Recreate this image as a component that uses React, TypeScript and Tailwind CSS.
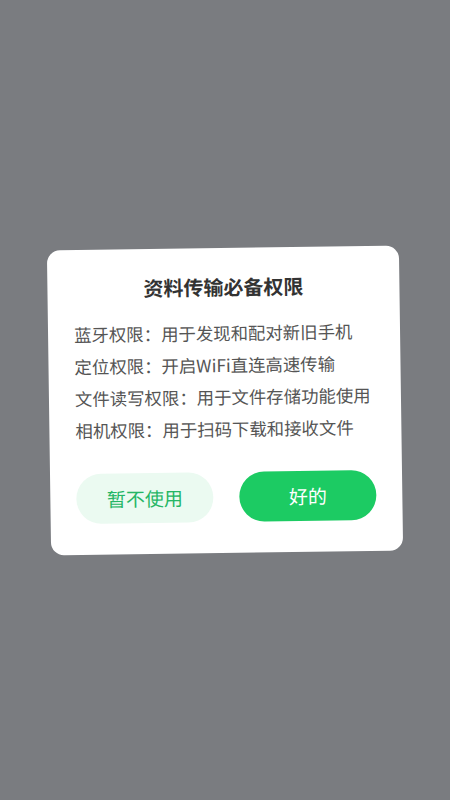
const FONT = '"Noto Sans CJK SC", "Noto Sans", sans-serif';

const PERMISSIONS = [
  { name: "蓝牙权限", desc: "用于发现和配对新旧手机" },
  { name: "定位权限", desc: "开启WiFi直连高速传输" },
  { name: "文件读写权限", desc: "用于文件存储功能使用" },
  { name: "相机权限", desc: "用于扫码下载和接收文件" },
];

export default function App() {
  return (
    <div
      className="w-[450px] h-[800px] bg-[#7a7c80] flex items-center justify-center overflow-hidden"
      style={{ fontFamily: FONT }}
    >
      {/* permission dialog */}
      <div className="w-[352px] -rotate-[0.8deg] rounded-[13px] bg-white pt-[25px] pb-[31px] px-[26px] flex flex-col">
        <h2 className="text-center text-[20px] leading-[28px] font-semibold text-[#333333]">
          资料传输必备权限
        </h2>

        <div className="mt-[20px] flex flex-col gap-[8px] text-[17.4px] leading-[24px] text-[#555555]">
          {PERMISSIONS.map((p) => (
            <p key={p.name} className="whitespace-nowrap">
              {p.name}：{p.desc}
            </p>
          ))}
        </div>

        <div className="mt-[31px] flex gap-[26px]">
          <button className="flex-1 h-[50px] rounded-full bg-[#ebfaf1] text-[19px] text-[#25b665]">
            暂不使用
          </button>
          <button className="flex-1 h-[50px] rounded-full bg-[#1ccb63] text-[19px] text-white">
            好的
          </button>
        </div>
      </div>
    </div>
  );
}
